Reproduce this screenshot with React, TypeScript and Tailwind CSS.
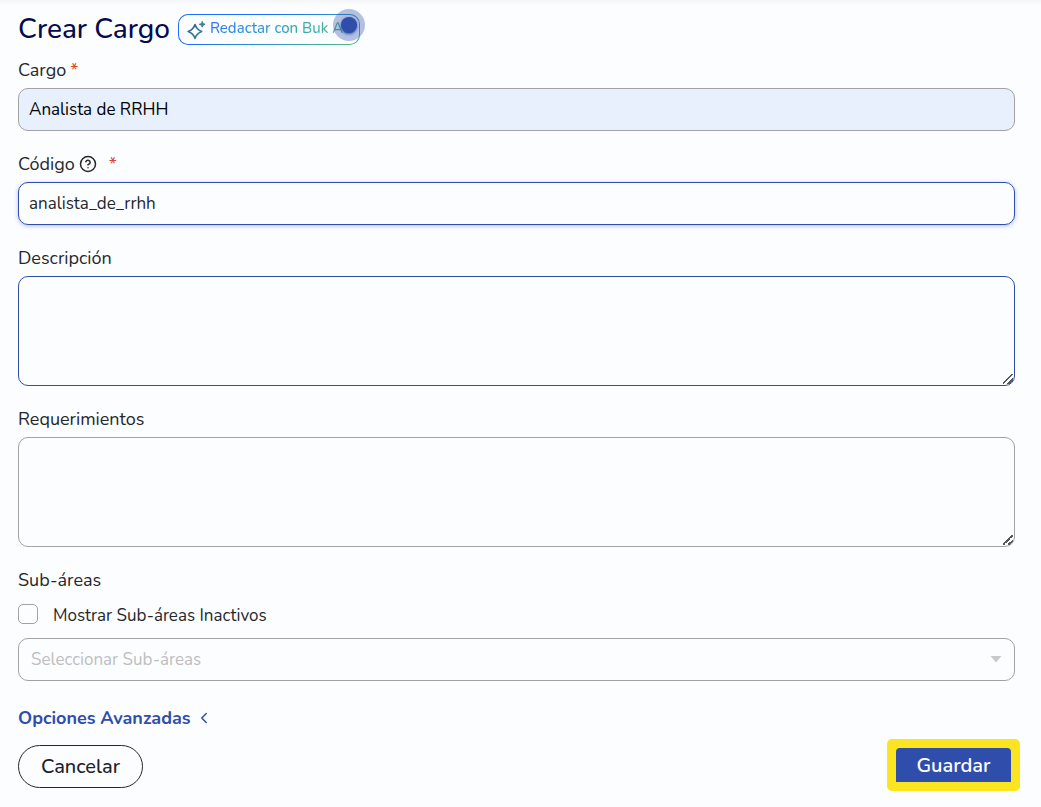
import type { ReactNode } from "react";
import { ChevronLeft, CircleHelp } from "lucide-react";

const fieldClass =
  "block w-full rounded-[10px] border px-[10px] text-[17px] outline-none";

const gripClass =
  "[&::-webkit-resizer]:bg-[linear-gradient(135deg,transparent_44%,#55585e_44%,#55585e_55%,transparent_55%,transparent_70%,#55585e_70%,#55585e_82%,transparent_82%)] [&::-webkit-resizer]:bg-[length:10px_10px] [&::-webkit-resizer]:bg-[position:4px_4px] [&::-webkit-resizer]:bg-no-repeat";

function Label({ htmlFor, children }: { htmlFor: string; children: ReactNode }) {
  return (
    <label
      className="mb-[6px] flex h-6 items-center text-lg text-[#25272b]"
      htmlFor={htmlFor}
    >
      {children}
    </label>
  );
}

function SparkIcon() {
  return (
    <svg className="size-5 shrink-0" fill="none" viewBox="0 0 20 20">
      <defs>
        <linearGradient id="spark" x1="0" x2="1" y1="0" y2="1">
          <stop offset="0" stopColor="#2455a8" />
          <stop offset="1" stopColor="#3f8f8c" />
        </linearGradient>
      </defs>
      <path
        d="M8 4.6 C9.2 8.6 10.6 10.2 14.8 11.6 C10.8 13 9.4 14.4 8 18.4 C6.6 14.4 5.2 13 1.2 11.6 C5.2 10.2 6.8 8.6 8 4.6Z"
        stroke="url(#spark)"
        strokeLinejoin="round"
        strokeWidth="1.6"
      />
      <path
        d="M15.2 1.4 C15.7 3.2 16.3 3.8 18.1 4.3 C16.3 4.8 15.7 5.4 15.2 7.2 C14.7 5.4 14.1 4.8 12.3 4.3 C14.1 3.8 14.7 3.2 15.2 1.4Z"
        fill="#3b7f9c"
        stroke="#3b7f9c"
        strokeWidth="1"
      />
    </svg>
  );
}

export default function App() {
  return (
    <main className="min-h-screen bg-[#fcfdff] bg-[linear-gradient(#f5f6f8,#fcfdff_6px)] bg-no-repeat pt-[14px] pr-[26px] pb-3 pl-[18px] font-['Nunito','Lato',sans-serif]">
      <div className="mb-[13px] flex h-[31px] items-center gap-2">
        <h1 className="pb-[2px] text-[28px] leading-8 font-medium text-[#060b4f]">
          Crear Cargo
        </h1>
        <button
          className="relative flex h-[31px] w-[182px] items-center gap-[3px] rounded-[10px] border border-transparent bg-[linear-gradient(#fcfdff,#fcfdff),linear-gradient(160deg,#1c6dfb_35%,#55c07d)] bg-origin-border pl-2 [background-clip:padding-box,border-box]"
          type="button"
        >
          <SparkIcon />
          <span className="bg-linear-to-r from-[#2f78f5] to-[#4dbb86] bg-clip-text pb-[3px] text-[15px] leading-6 font-medium whitespace-nowrap text-transparent">
            Redactar con Buk AI
          </span>
          <span className="absolute -top-[6px] -right-[6px] flex size-8 items-center justify-center rounded-full bg-[#2f4daa]/35">
            <span className="size-4 rounded-full bg-[#2f4daa] shadow-[0_1px_3px_#2f4daa]" />
          </span>
        </button>
      </div>

      <form>
        <div className="mb-[21px]">
          <Label htmlFor="cargo">
            Cargo <span className="ml-1 text-[#e0442e]">*</span>
          </Label>
          <input
            className={`${fieldClass} h-[43px] border-[#a0a2a6] bg-[#e8f0fe] text-black`}
            defaultValue="Analista de RRHH"
            id="cargo"
            type="text"
          />
        </div>

        <div className="mb-[21px]">
          <Label htmlFor="codigo">
            Código
            <CircleHelp className="ml-1 size-[18px]" />
            <span className="ml-3 text-[#e0442e]">*</span>
          </Label>
          <input
            className={`${fieldClass} h-[43px] border-[#2f4daa] text-[#25272b] shadow-[0_1px_4px_#2f4dff60]`}
            defaultValue="analista_de_rrhh"
            id="codigo"
            type="text"
          />
        </div>

        <div className="mb-[21px]">
          <Label htmlFor="descripcion">Descripción</Label>
          <textarea
            className={`${fieldClass} ${gripClass} h-[110px] border-[#2f4daa] py-2`}
            id="descripcion"
          />
        </div>

        <div className="mb-[21px]">
          <Label htmlFor="requerimientos">Requerimientos</Label>
          <textarea
            className={`${fieldClass} ${gripClass} h-[110px] border-[#a0a2a6] py-2`}
            id="requerimientos"
          />
        </div>

        <Label htmlFor="subareas">Sub-áreas</Label>
        <div className="mb-[10px] flex h-[30px] items-center pt-[6px] text-[17px] text-[#25272b]">
          <input
            className="mr-[15px] mb-1 size-5 appearance-none rounded-[5px] border border-[#a0a2a6] checked:bg-[#2f4daa]"
            id="inactivos"
            type="checkbox"
          />
          <label htmlFor="inactivos">Mostrar Sub-áreas Inactivos</label>
        </div>
        <div className="relative">
          <select
            className="block h-[43px] w-full appearance-none rounded-[10px] border border-[#a0a2a6] px-3 text-[17px] text-[#bdbec1] outline-none"
            id="subareas"
          >
            <option>Seleccionar Sub-áreas</option>
          </select>
          <svg
            className="pointer-events-none absolute top-[18px] right-[13px] h-[7px] w-3"
            viewBox="0 0 12 7"
          >
            <path d="M0.5 0H11.5L6 6.5Z" fill="#c8c9cb" />
          </svg>
        </div>

        <button
          className="mt-[25px] mb-[9px] flex h-6 items-center gap-1 text-lg font-bold text-[#2f4daa]"
          type="button"
        >
          Opciones Avanzadas
          <ChevronLeft className="size-[18px]" />
        </button>

        <div className="flex items-center justify-between">
          <button
            className="mt-[2px] h-[43px] w-[125px] rounded-full border border-[#25272b] pt-[2px] text-xl font-medium text-[#202226]"
            type="button"
          >
            Cancelar
          </button>
          <div className="-mr-[5px] rounded-[5px] bg-[#fbe520] p-[9px]">
            <button
              className="block h-[34px] w-[115px] rounded-t-[4px] bg-[#2f4daa] pt-[2px] text-xl font-semibold text-white"
              type="submit"
            >
              Guardar
            </button>
          </div>
        </div>
      </form>
    </main>
  );
}
